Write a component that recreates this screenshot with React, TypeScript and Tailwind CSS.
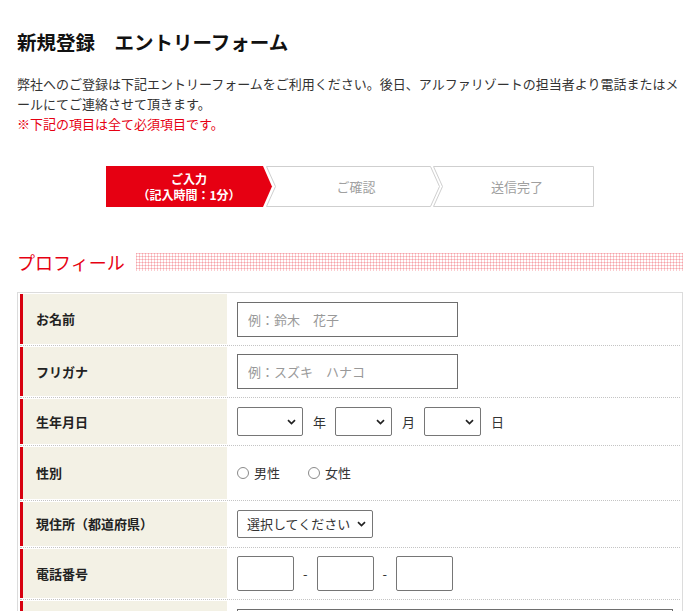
import React from "react";

function Row({ label, h, children }: { label: string; h: string; children?: React.ReactNode }) {
  return (
    <div className="flex border-b border-dotted border-[#c4c4c4] py-px">
      <div
        className={`flex w-[207px] shrink-0 items-center border-l-[3px] border-[#d7000f] bg-[#f3f1e5] pl-[13px] text-[13px] font-bold text-[#222] ${h}`}
      >
        {label}
      </div>
      <div className="flex flex-1 items-center pl-[10px] text-[13px] text-[#333]">{children}</div>
    </div>
  );
}

function Chevron() {
  return (
    <svg
      className="pointer-events-none absolute right-[7px] top-1/2 -translate-y-1/2"
      width="9"
      height="6"
      viewBox="0 0 9 6"
    >
      <path d="M1 1.2l3.5 3.3L8 1.2" stroke="#222" strokeWidth="1.7" fill="none" />
    </svg>
  );
}

function Select({ w, h, children }: { w: string; h: string; children?: React.ReactNode }) {
  return (
    <div className={`relative ${w}`}>
      <select
        className={`w-full appearance-none rounded-[2px] border border-[#767676] bg-white pl-[9px] pr-[18px] text-[13px] text-[#333] outline-none ${h}`}
      >
        {children}
      </select>
      <Chevron />
    </div>
  );
}

function Radio({ label }: { label: string }) {
  return (
    <label className="flex items-center gap-[5px]">
      <input
        type="radio"
        name="sex"
        className="h-[12px] w-[12px] appearance-none rounded-full border border-[#8a8a8a] bg-white"
      />
      <span>{label}</span>
    </label>
  );
}

export default function App() {
  return (
    <div className="min-h-[611px] bg-white pb-10 pt-[30px] font-['Noto_Sans_CJK_JP',sans-serif] text-[#222]">
      <div className="px-[17px]">
        <h1 className="text-[19.5px] font-bold leading-[24px] text-[#111]">新規登録　エントリーフォーム</h1>
        <p className="mt-[20px] text-[13px] leading-[20px] text-[#333]">
          弊社へのご登録は下記エントリーフォームをご利用ください。後日、アルファリゾートの担当者より電話またはメールにてご連絡させて頂きます。
        </p>
        <p className="text-[13px] leading-[20px] text-[#e60012]">※下記の項目は全て必須項目です。</p>
      </div>

      {/* steps */}
      <div className="relative mx-auto mt-[32px] flex h-[41px] w-[488px]">
        <svg className="absolute inset-0" width="488" height="41" viewBox="0 0 488 41">
          <polygon points="0,0 157,0 166,20.5 157,41 0,41" fill="#e60012" />
          <polygon
            points="160.5,0.5 324.5,0.5 333.5,20.5 324.5,40.5 160.5,40.5 169.5,20.5"
            fill="#fff"
            stroke="#cfcfcf"
          />
          <polygon
            points="327.5,0.5 487.5,0.5 487.5,40.5 327.5,40.5 336.5,20.5"
            fill="#fff"
            stroke="#cfcfcf"
          />
        </svg>
        <div className="relative flex w-[166px] flex-col items-center justify-center text-[12px] font-bold leading-[16px] text-white">
          <span>ご入力</span>
          <span>（記入時間：1分）</span>
        </div>
        <div className="relative flex w-[168px] items-center justify-center text-[13px] text-[#a0a0a0]">ご確認</div>
        <div className="relative flex flex-1 items-center justify-center text-[13px] text-[#a0a0a0]">送信完了</div>
      </div>

      {/* profile heading */}
      <div className="mt-[43px] flex h-[24px] items-center gap-[11px] px-[17px]">
        <h2 className="shrink-0 text-[18px] leading-[24px] text-[#e60012]">プロフィール</h2>
        <div className="h-[18px] flex-1 bg-[linear-gradient(90deg,rgba(230,0,18,0.2)_1px,transparent_1px),linear-gradient(rgba(230,0,18,0.2)_1px,transparent_1px)] bg-[length:3px_3px]" />
      </div>

      {/* form table */}
      <div className="mx-[17px] mt-[18px] border border-[#dcdcdc] px-[2px]">
        <Row label="お名前" h="h-[50px]">
          <input
            type="text"
            placeholder="例：鈴木　花子"
            className="h-[35px] w-[221px] border border-[#6e6e6e] bg-white px-[10px] text-[13px] outline-none placeholder:text-[#999]"
          />
        </Row>
        <Row label="フリガナ" h="h-[49px]">
          <input
            type="text"
            placeholder="例：スズキ　ハナコ"
            className="h-[35px] w-[221px] border border-[#6e6e6e] bg-white px-[10px] text-[13px] outline-none placeholder:text-[#999]"
          />
        </Row>
        <Row label="生年月日" h="h-[45px]">
          <div className="flex items-center">
            <Select w="w-[66px]" h="h-[29px]">
              <option></option>
            </Select>
            <span className="ml-[10px] mr-[9px]">年</span>
            <Select w="w-[57px]" h="h-[29px]">
              <option></option>
            </Select>
            <span className="ml-[10px] mr-[9px]">月</span>
            <Select w="w-[57px]" h="h-[29px]">
              <option></option>
            </Select>
            <span className="ml-[10px]">日</span>
          </div>
        </Row>
        <Row label="性別" h="h-[52px]">
          <div className="flex items-center gap-[28px]">
            <Radio label="男性" />
            <Radio label="女性" />
          </div>
        </Row>
        <Row label="現住所（都道府県）" h="h-[44px]">
          <Select w="w-[136px]" h="h-[28px]">
            <option>選択してください</option>
          </Select>
        </Row>
        <Row label="電話番号" h="h-[49px]">
          <div className="flex items-center">
            <input type="text" className="h-[35px] w-[57px] rounded-[2px] border border-[#767676] bg-white outline-none" />
            <span className="mx-[9px]">-</span>
            <input type="text" className="h-[35px] w-[57px] rounded-[2px] border border-[#767676] bg-white outline-none" />
            <span className="mx-[9px]">-</span>
            <input type="text" className="h-[35px] w-[57px] rounded-[2px] border border-[#767676] bg-white outline-none" />
          </div>
        </Row>
        <Row label="メールアドレス" h="h-[50px]">
          <input
            type="email"
            className="h-[35px] w-[436px] border border-[#6e6e6e] bg-white px-[10px] text-[13px] outline-none"
          />
        </Row>
      </div>
    </div>
  );
}
